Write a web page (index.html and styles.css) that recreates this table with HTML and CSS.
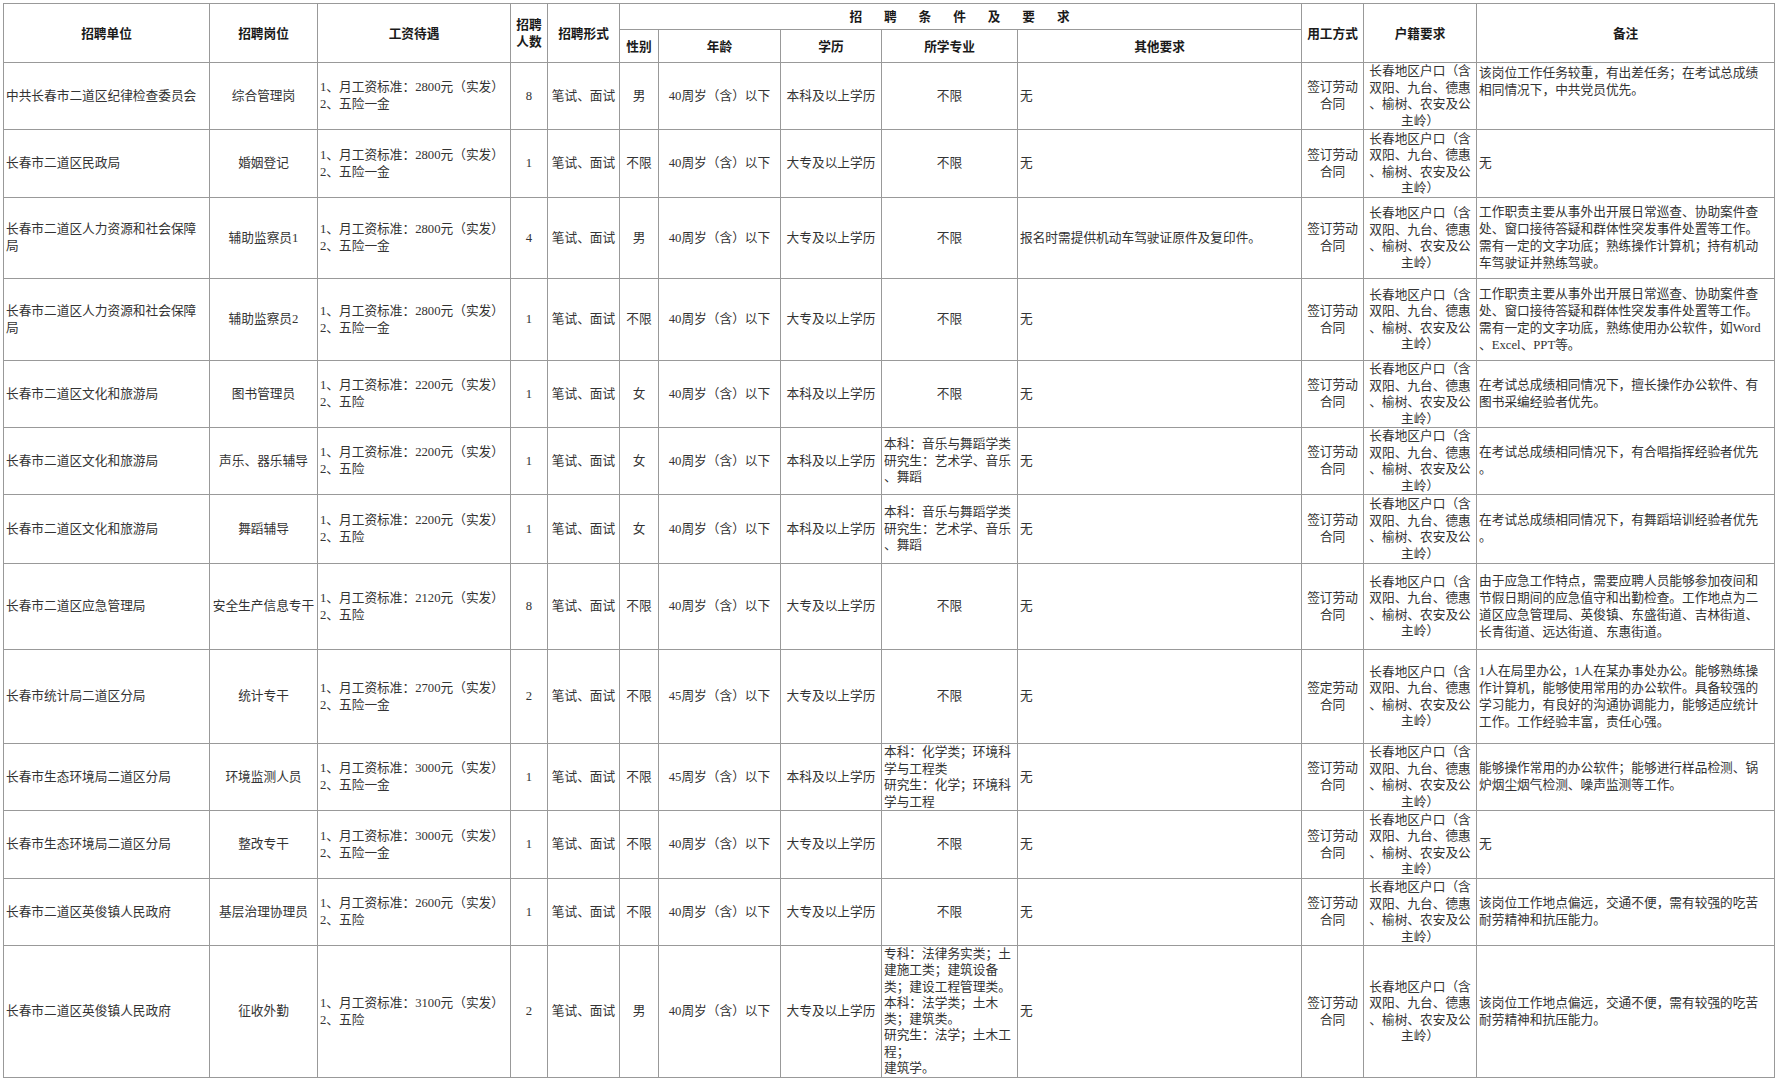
FILE: index.html
```html
<!DOCTYPE html>
<html lang="zh-CN">
<head>
<meta charset="utf-8">
<title>招聘岗位一览表</title>
<link rel="stylesheet" href="styles.css">
</head>
<body>
<div class="sheet">
<table class="grid">
<colgroup>
<col class="c-unit"><col class="c-post"><col class="c-pay"><col class="c-num"><col class="c-form"><col class="c-sex"><col class="c-age"><col class="c-edu"><col class="c-major"><col class="c-other"><col class="c-emp"><col class="c-hukou"><col class="c-note">
</colgroup>
<thead>
<tr class="h-top">
<th rowspan="2">招聘单位</th>
<th rowspan="2">招聘岗位</th>
<th rowspan="2">工资待遇</th>
<th rowspan="2">招聘<br>人数</th>
<th rowspan="2">招聘形式</th>
<th colspan="5" class="span-title">招聘条件及要求</th>
<th rowspan="2">用工方式</th>
<th rowspan="2">户籍要求</th>
<th rowspan="2">备注</th>
</tr>
<tr class="h-sub">
<th>性别</th>
<th>年龄</th>
<th>学历</th>
<th>所学专业</th>
<th>其他要求</th>
</tr>
</thead>
<tbody>
<tr class="r67">
<td class="l">中共长春市二道区纪律检查委员会</td>
<td>综合管理岗</td>
<td class="l">1、月工资标准：2800元（实发）<br>2、五险一金</td>
<td>8</td>
<td>笔试、面试</td>
<td>男</td>
<td>40周岁（含）以下</td>
<td>本科及以上学历</td>
<td>不限</td>
<td class="l">无</td>
<td>签订劳动<br>合同</td>
<td class="tight">长春地区户口（含<br>双阳、九台、德惠<br>、榆树、农安及公<br>主岭）</td>
<td class="l note top">该岗位工作任务较重，有出差任务；在考试总成绩<br>相同情况下，中共党员优先。</td>
</tr>
<tr class="r68">
<td class="l">长春市二道区民政局</td>
<td>婚姻登记</td>
<td class="l">1、月工资标准：2800元（实发）<br>2、五险一金</td>
<td>1</td>
<td>笔试、面试</td>
<td>不限</td>
<td>40周岁（含）以下</td>
<td>大专及以上学历</td>
<td>不限</td>
<td class="l">无</td>
<td>签订劳动<br>合同</td>
<td class="tight">长春地区户口（含<br>双阳、九台、德惠<br>、榆树、农安及公<br>主岭）</td>
<td class="l note">无</td>
</tr>
<tr class="r81">
<td class="l">长春市二道区人力资源和社会保障<br>局</td>
<td>辅助监察员1</td>
<td class="l">1、月工资标准：2800元（实发）<br>2、五险一金</td>
<td>4</td>
<td>笔试、面试</td>
<td>男</td>
<td>40周岁（含）以下</td>
<td>大专及以上学历</td>
<td>不限</td>
<td class="l">报名时需提供机动车驾驶证原件及复印件。</td>
<td>签订劳动<br>合同</td>
<td class="tight">长春地区户口（含<br>双阳、九台、德惠<br>、榆树、农安及公<br>主岭）</td>
<td class="l note">工作职责主要从事外出开展日常巡查、协助案件查<br>处、窗口接待答疑和群体性突发事件处置等工作。<br>需有一定的文字功底；熟练操作计算机；持有机动<br>车驾驶证并熟练驾驶。</td>
</tr>
<tr class="r82">
<td class="l">长春市二道区人力资源和社会保障<br>局</td>
<td>辅助监察员2</td>
<td class="l">1、月工资标准：2800元（实发）<br>2、五险一金</td>
<td>1</td>
<td>笔试、面试</td>
<td>不限</td>
<td>40周岁（含）以下</td>
<td>大专及以上学历</td>
<td>不限</td>
<td class="l">无</td>
<td>签订劳动<br>合同</td>
<td class="tight">长春地区户口（含<br>双阳、九台、德惠<br>、榆树、农安及公<br>主岭）</td>
<td class="l note">工作职责主要从事外出开展日常巡查、协助案件查<br>处、窗口接待答疑和群体性突发事件处置等工作。<br>需有一定的文字功底，熟练使用办公软件，如Word<br>、Excel、PPT等。</td>
</tr>
<tr class="r67">
<td class="l">长春市二道区文化和旅游局</td>
<td>图书管理员</td>
<td class="l">1、月工资标准：2200元（实发）<br>2、五险</td>
<td>1</td>
<td>笔试、面试</td>
<td>女</td>
<td>40周岁（含）以下</td>
<td>本科及以上学历</td>
<td>不限</td>
<td class="l">无</td>
<td>签订劳动<br>合同</td>
<td class="tight">长春地区户口（含<br>双阳、九台、德惠<br>、榆树、农安及公<br>主岭）</td>
<td class="l note">在考试总成绩相同情况下，擅长操作办公软件、有<br>图书采编经验者优先。</td>
</tr>
<tr class="r67">
<td class="l">长春市二道区文化和旅游局</td>
<td>声乐、器乐辅导</td>
<td class="l">1、月工资标准：2200元（实发）<br>2、五险</td>
<td>1</td>
<td>笔试、面试</td>
<td>女</td>
<td>40周岁（含）以下</td>
<td>本科及以上学历</td>
<td class="l">本科：音乐与舞蹈学类<br>研究生：艺术学、音乐<br>、舞蹈</td>
<td class="l">无</td>
<td>签订劳动<br>合同</td>
<td class="tight">长春地区户口（含<br>双阳、九台、德惠<br>、榆树、农安及公<br>主岭）</td>
<td class="l note">在考试总成绩相同情况下，有合唱指挥经验者优先<br>。</td>
</tr>
<tr class="r69">
<td class="l">长春市二道区文化和旅游局</td>
<td>舞蹈辅导</td>
<td class="l">1、月工资标准：2200元（实发）<br>2、五险</td>
<td>1</td>
<td>笔试、面试</td>
<td>女</td>
<td>40周岁（含）以下</td>
<td>本科及以上学历</td>
<td class="l">本科：音乐与舞蹈学类<br>研究生：艺术学、音乐<br>、舞蹈</td>
<td class="l">无</td>
<td>签订劳动<br>合同</td>
<td class="tight">长春地区户口（含<br>双阳、九台、德惠<br>、榆树、农安及公<br>主岭）</td>
<td class="l note">在考试总成绩相同情况下，有舞蹈培训经验者优先<br>。</td>
</tr>
<tr class="r86">
<td class="l">长春市二道区应急管理局</td>
<td>安全生产信息专干</td>
<td class="l">1、月工资标准：2120元（实发）<br>2、五险</td>
<td>8</td>
<td>笔试、面试</td>
<td>不限</td>
<td>40周岁（含）以下</td>
<td>大专及以上学历</td>
<td>不限</td>
<td class="l">无</td>
<td>签订劳动<br>合同</td>
<td class="tight">长春地区户口（含<br>双阳、九台、德惠<br>、榆树、农安及公<br>主岭）</td>
<td class="l note">由于应急工作特点，需要应聘人员能够参加夜间和<br>节假日期间的应急值守和出勤检查。工作地点为二<br>道区应急管理局、英俊镇、东盛街道、吉林街道、<br>长青街道、远达街道、东惠街道。</td>
</tr>
<tr class="r94">
<td class="l">长春市统计局二道区分局</td>
<td>统计专干</td>
<td class="l">1、月工资标准：2700元（实发）<br>2、五险一金</td>
<td>2</td>
<td>笔试、面试</td>
<td>不限</td>
<td>45周岁（含）以下</td>
<td>大专及以上学历</td>
<td>不限</td>
<td class="l">无</td>
<td>签定劳动<br>合同</td>
<td class="tight">长春地区户口（含<br>双阳、九台、德惠<br>、榆树、农安及公<br>主岭）</td>
<td class="l note">1人在局里办公，1人在某办事处办公。能够熟练操<br>作计算机，能够使用常用的办公软件。具备较强的<br>学习能力，有良好的沟通协调能力，能够适应统计<br>工作。工作经验丰富，责任心强。</td>
</tr>
<tr class="r67">
<td class="l">长春市生态环境局二道区分局</td>
<td>环境监测人员</td>
<td class="l">1、月工资标准：3000元（实发）<br>2、五险一金</td>
<td>1</td>
<td>笔试、面试</td>
<td>不限</td>
<td>45周岁（含）以下</td>
<td>本科及以上学历</td>
<td class="l tight">本科：化学类；环境科<br>学与工程类<br>研究生：化学；环境科<br>学与工程</td>
<td class="l">无</td>
<td>签订劳动<br>合同</td>
<td class="tight">长春地区户口（含<br>双阳、九台、德惠<br>、榆树、农安及公<br>主岭）</td>
<td class="l note">能够操作常用的办公软件；能够进行样品检测、锅<br>炉烟尘烟气检测、噪声监测等工作。</td>
</tr>
<tr class="r68">
<td class="l">长春市生态环境局二道区分局</td>
<td>整改专干</td>
<td class="l">1、月工资标准：3000元（实发）<br>2、五险一金</td>
<td>1</td>
<td>笔试、面试</td>
<td>不限</td>
<td>40周岁（含）以下</td>
<td>大专及以上学历</td>
<td>不限</td>
<td class="l">无</td>
<td>签订劳动<br>合同</td>
<td class="tight">长春地区户口（含<br>双阳、九台、德惠<br>、榆树、农安及公<br>主岭）</td>
<td class="l note">无</td>
</tr>
<tr class="r67">
<td class="l">长春市二道区英俊镇人民政府</td>
<td>基层治理协理员</td>
<td class="l">1、月工资标准：2600元（实发）<br>2、五险</td>
<td>1</td>
<td>笔试、面试</td>
<td>不限</td>
<td>40周岁（含）以下</td>
<td>大专及以上学历</td>
<td>不限</td>
<td class="l">无</td>
<td>签订劳动<br>合同</td>
<td class="tight">长春地区户口（含<br>双阳、九台、德惠<br>、榆树、农安及公<br>主岭）</td>
<td class="l note">该岗位工作地点偏远，交通不便，需有较强的吃苦<br>耐劳精神和抗压能力。</td>
</tr>
<tr class="r132">
<td class="l">长春市二道区英俊镇人民政府</td>
<td>征收外勤</td>
<td class="l">1、月工资标准：3100元（实发）<br>2、五险</td>
<td>2</td>
<td>笔试、面试</td>
<td>男</td>
<td>40周岁（含）以下</td>
<td>大专及以上学历</td>
<td class="l top-clip"><div class="clip">专科：法律务实类；土<br>建施工类；建筑设备<br>类；建设工程管理类。<br>本科：法学类；土木<br>类；建筑类。<br>研究生：法学；土木工<br>程；<br>建筑学。</div></td>
<td class="l">无</td>
<td>签订劳动<br>合同</td>
<td class="tight">长春地区户口（含<br>双阳、九台、德惠<br>、榆树、农安及公<br>主岭）</td>
<td class="l note">该岗位工作地点偏远，交通不便，需有较强的吃苦<br>耐劳精神和抗压能力。</td>
</tr>
</tbody>
</table>
</div>
</body>
</html>
```

FILE: styles.css
```css
html,
body {
  margin: 0;
  padding: 0;
  background: #ffffff;
}

body {
  width: 1777px;
  height: 1080px;
  overflow: hidden;
  font-family: "Liberation Serif", "Noto Sans CJK SC", serif;
  font-size: 12.7px;
  color: #333333;
}

.sheet {
  padding: 3px 0 0 3px;
}

.grid {
  border-collapse: collapse;
  table-layout: fixed;
  width: 1771px;
}

.grid th,
.grid td {
  border: 1px solid #999999;
  padding: 0 2px;
  line-height: 16.8px;
  text-align: center;
  vertical-align: middle;
  white-space: nowrap;
  overflow: hidden;
  font-weight: 400;
}

.grid th {
  font-family: "Noto Sans CJK SC", sans-serif;
  font-weight: 700;
  color: #1a1a1a;
}

.grid .l {
  text-align: left;
}

.grid .tight {
  line-height: 16.5px;
}

.grid .note {
  line-height: 17px;
}

.grid .top {
  vertical-align: top;
  padding-top: 2px;
}

.grid .top-clip {
  vertical-align: top;
  padding-top: 0;
}

.clip {
  height: 131px;
  overflow: hidden;
  line-height: 16.3px;
}

.grid .span-title {
  letter-spacing: 21.9px;
  padding-left: 21.9px;
}

/* column widths */
.c-unit { width: 206px; }
.c-post { width: 108px; }
.c-pay { width: 193px; }
.c-num { width: 37px; }
.c-form { width: 72px; }
.c-sex { width: 39px; }
.c-age { width: 122px; }
.c-edu { width: 101px; }
.c-major { width: 136px; }
.c-other { width: 284px; }
.c-emp { width: 62px; }
.c-hukou { width: 113px; }
.c-note { width: 298px; }

/* row heights */
.h-top { height: 26px; }
.h-sub { height: 33px; }
.r67 { height: 67px; }
.r68 { height: 68px; }
.r69 { height: 69px; }
.r81 { height: 81px; }
.r82 { height: 82px; }
.r86 { height: 86px; }
.r94 { height: 94px; }
.r132 { height: 132px; }
```
